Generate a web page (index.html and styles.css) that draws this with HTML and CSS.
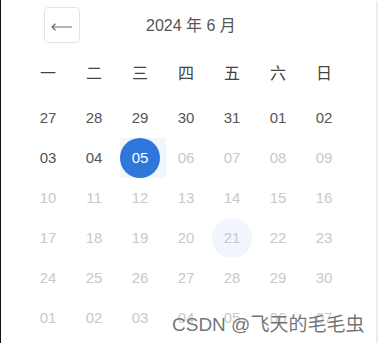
FILE: index.html
```html
<!DOCTYPE html>
<html>
<head>
    <link rel="stylesheet" href="styles.css">
</head>
<body>

    <div class="panel">
        <header class="head">
            <button class="back">
                <svg width="22" height="10" viewBox="0 0 22 10">
                    <path d="M1 5 H21" stroke="#666" stroke-width="1.2" fill="none"/>
                    <path d="M4.5 1.8 L1 5 L4.5 8.2" stroke="#666" stroke-width="1.2" fill="none"/>
                </svg>
            </button>
            <h1 class="title">2024 年 6 月</h1>
        </header>

        <div class="week">
            <span>一</span><span>二</span><span>三</span><span>四</span><span>五</span><span>六</span><span>日</span>
        </div>

        <div class="days" id="days"></div>

        <div class="mark">CSDN @飞天的毛毛虫</div>
    </div>

<script>
    // 6 rows starting on Monday 27 May
    const days = document.getElementById('days');
    const list = [27, 28, 29, 30, 31];
    for (let i = 1; i <= 30; i++) list.push(i);
    for (let i = 1; i <= 7; i++) list.push(i);

    list.forEach((d, i) => {
        const cell = document.createElement('div');
        cell.className = 'cell';
        const dot = document.createElement('span');
        dot.className = 'day';
        dot.textContent = String(d).padStart(2, '0');
        if (i > 9) dot.classList.add('off');
        if (i === 9) { cell.classList.add('today'); dot.classList.add('picked'); }
        if (i === 25) dot.classList.add('hover');
        cell.appendChild(dot);
        days.appendChild(cell);
    });
</script>
</body>
</html>
```

FILE: styles.css
```css
body {
    margin: 0;
    background-color: white;
    font-family: "Liberation Sans", Arial, "Noto Sans CJK SC", sans-serif;
    color: #555;
}

.panel {
    position: relative;
    width: 378px;
    height: 343px;
    border-left: 1px solid #111;
    border-right: 2px solid #ececec;
    border-top-right-radius: 4px;
    box-sizing: border-box;
    padding: 7px 0 0 27px;
    overflow: hidden;
}

.head {
    display: flex;
    align-items: center;
    height: 36px;
}

.back {
    width: 36px;
    height: 36px;
    margin-left: 16px;
    border: 1px solid #e4e4e4;
    border-radius: 4px;
    background-color: white;
    display: flex;
    align-items: center;
    justify-content: center;
    padding: 3px 0 0 0;
}

.title {
    margin: 0 0 3px 66px;
    font-size: 16px;
    font-weight: normal;
    color: #555;
}

.week {
    display: grid;
    grid-template-columns: repeat(7, 46px);
    margin-top: 20px;
    height: 22px;
    line-height: 22px;
    font-size: 16px;
    color: #444;
}

.week span {
    width: 40px;
    text-align: center;
}

.days {
    display: grid;
    grid-template-columns: repeat(7, 46px);
    grid-auto-rows: 40px;
    margin-top: 13px;
}

.cell {
    height: 40px;
}

.today {
    background-color: #f1f6fe;
}

.day {
    display: block;
    width: 40px;
    height: 40px;
    line-height: 40px;
    border-radius: 50%;
    text-align: center;
    font-size: 15px;
    color: #555;
}

.off {
    color: #c9c9c9;
}

.picked {
    background-color: #2f77db;
    color: white;
}

.hover {
    background-color: #f1f6fe;
}

.mark {
    position: absolute;
    left: 171px;
    top: 309px;
    font-size: 19px;
    color: rgba(90, 90, 90, 0.85);
    text-shadow: 0 0 1px white;
    white-space: nowrap;
}
```
